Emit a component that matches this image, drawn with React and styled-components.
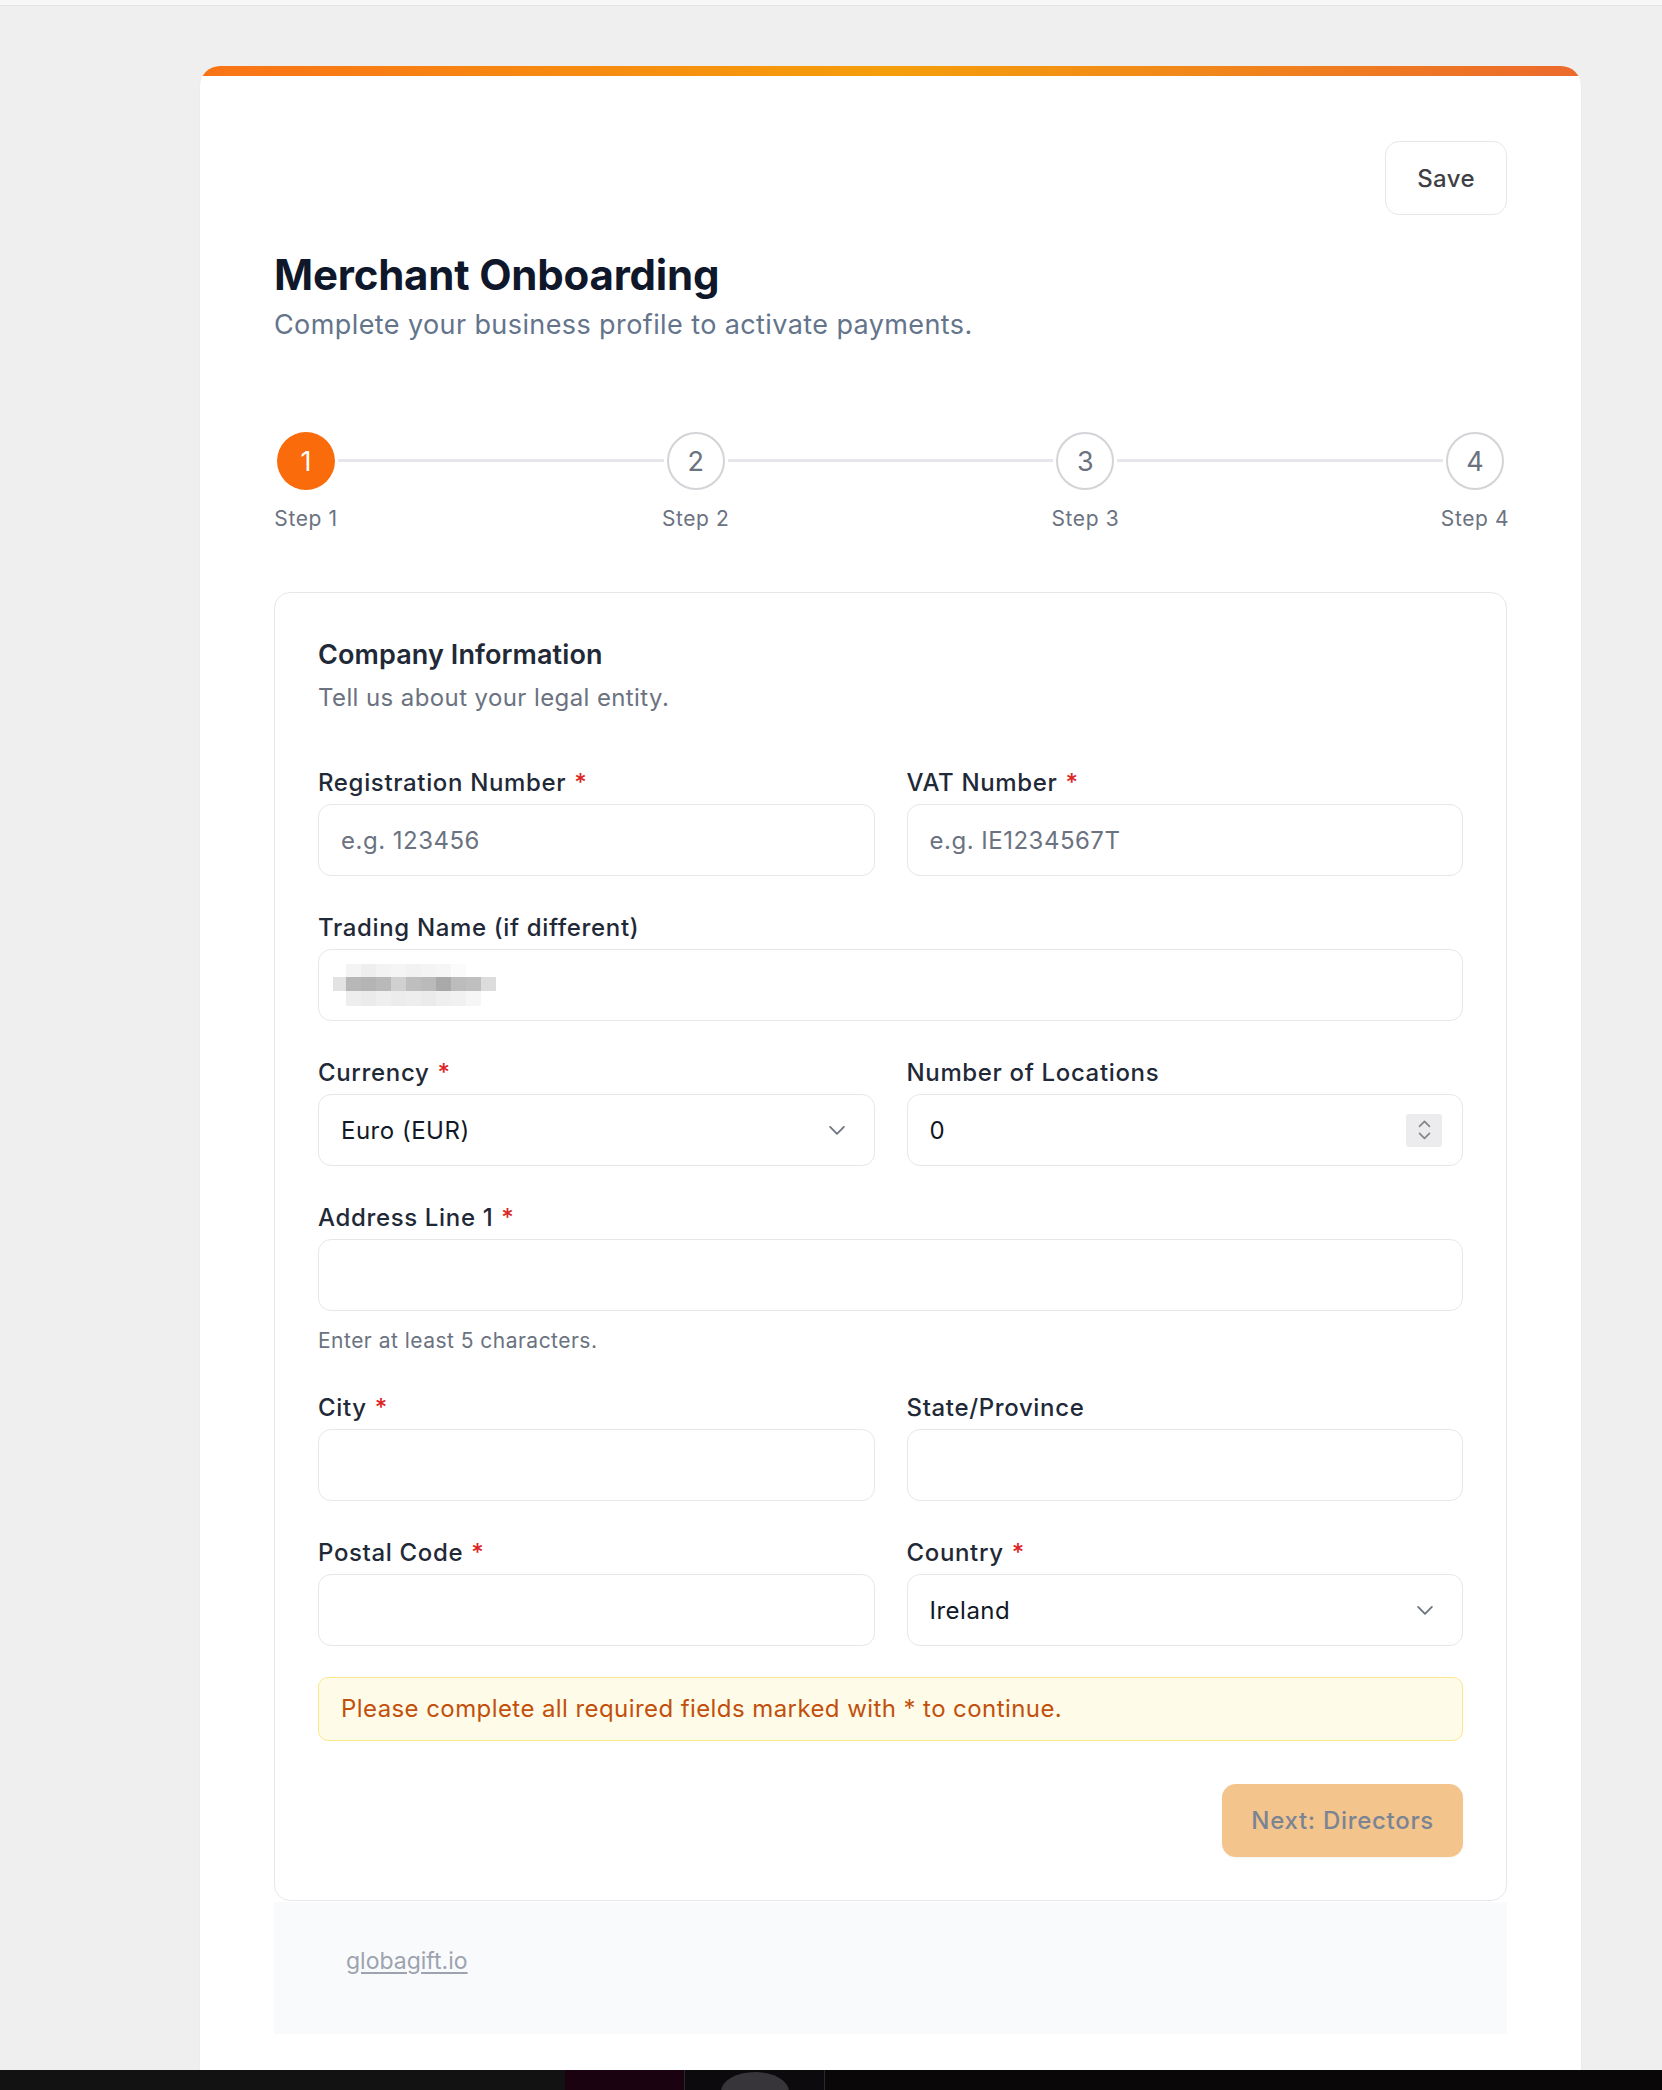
import React from "react";
import styled, { createGlobalStyle } from "styled-components";

const GlobalStyle = createGlobalStyle`
  html, body {
    margin: 0;
    padding: 0;
    background: #efefef;
  }
  body {
    font-family: Inter, "Noto Sans", "Liberation Sans", sans-serif;
    letter-spacing: 0.4px;
    -webkit-font-smoothing: antialiased;
  }
  * {
    box-sizing: border-box;
  }
`;

const Page = styled.div`
  width: 1662px;
  height: 2090px;
  display: flex;
  flex-direction: column;
  overflow: hidden;
  background: #efefef;
`;

const TopStrip = styled.div`
  height: 6px;
  flex-shrink: 0;
  background: #f7f7f7;
  border-bottom: 1px solid #e3e3e3;
`;

const Stage = styled.div`
  flex: 1;
  min-height: 0;
  overflow: hidden;
  padding: 60px 0 0 200px;
`;

const Card = styled.div`
  width: 1381px;
  min-height: 100%;
  background: #fff;
  border-radius: 20px 20px 0 0;
  overflow: hidden;
  box-shadow: 0 1px 3px rgba(0, 0, 0, 0.04);
`;

const Accent = styled.div`
  height: 10px;
  background: linear-gradient(90deg, #f97316 0%, #f59e0b 50%, #ec6a2c 100%);
`;

const CardBody = styled.div`
  padding: 65px 74px 0 74px;
`;

const TopBar = styled.div`
  display: flex;
  justify-content: flex-end;
`;

const SaveButton = styled.button`
  height: 74px;
  padding: 0 31px;
  border: 1.5px solid #e5e7eb;
  border-radius: 14px;
  background: #fff;
  color: #3f3f46;
  font-family: inherit;
  font-size: 24px;
  font-weight: 500;
  letter-spacing: 0.4px;
  cursor: pointer;
`;

const Title = styled.h1`
  margin: 35px 0 0;
  font-size: 42px;
  line-height: 50px;
  font-weight: 700;
  color: #0f172a;
  letter-spacing: -0.2px;
`;

const Subtitle = styled.p`
  margin: 5px 0 0;
  font-size: 27px;
  line-height: 40px;
  color: #64748b;
`;

const Stepper = styled.div`
  display: flex;
  align-items: flex-start;
  margin-top: 87px;
`;

const Step = styled.div`
  display: flex;
  flex-direction: column;
  align-items: center;
  width: 64px;
`;

const Circle = styled.div`
  width: 58px;
  height: 58px;
  border-radius: 50%;
  display: flex;
  align-items: center;
  justify-content: center;
  font-size: 27px;
  letter-spacing: 0;
  background: ${(p) => (p.$active ? "#f96b0b" : "#fff")};
  color: ${(p) => (p.$active ? "#fff" : "#6b7280")};
  border: ${(p) => (p.$active ? "none" : "2px solid #d4d4d8")};
`;

const StepLabel = styled.span`
  margin-top: 14px;
  font-size: 21px;
  line-height: 30px;
  color: #6b7280;
  white-space: nowrap;
  letter-spacing: 0.6px;
`;

const Connector = styled.div`
  flex: 1;
  height: 3px;
  margin-top: 27px;
  background: #e5e7eb;
`;

const Panel = styled.section`
  margin-top: 58px;
  border: 1.5px solid #e5e7eb;
  border-radius: 16px;
  padding: 42px 43px 43px;
`;

const PanelTitle = styled.h2`
  margin: 0;
  font-size: 27px;
  line-height: 40px;
  font-weight: 600;
  color: #1f2937;
  letter-spacing: 0.1px;
`;

const PanelSubtitle = styled.p`
  margin: 5px 0 0;
  font-size: 24px;
  line-height: 36px;
  color: #6b7280;
`;

const Fields = styled.div`
  margin-top: 49px;
  display: grid;
  grid-template-columns: 1fr 1fr;
  column-gap: 32px;
  row-gap: 34px;
`;

const Field = styled.div`
  display: flex;
  flex-direction: column;
  grid-column: ${(p) => (p.$wide ? "1 / -1" : "auto")};
`;

const Label = styled.label`
  font-size: 24px;
  line-height: 36px;
  font-weight: 500;
  color: #1f2937;
  letter-spacing: 0.65px;
  margin-bottom: 3px;
`;

const Required = styled.span`
  color: #dc2626;
  margin-left: 8px;
`;

const TextInput = styled.input`
  height: 72px;
  width: 100%;
  border: 1.5px solid #e5e7eb;
  border-radius: 13px;
  padding: 0 22px;
  font-family: inherit;
  font-size: 24px;
  letter-spacing: 0.5px;
  color: #111827;
  background: #fff;
  outline: none;
  &::placeholder {
    color: #6b7280;
  }
`;

const Box = styled.div`
  height: 72px;
  border: 1.5px solid #e5e7eb;
  border-radius: 13px;
  padding: 0 28px 0 22px;
  display: flex;
  align-items: center;
  justify-content: space-between;
  background: #fff;
  font-size: 24px;
  letter-spacing: 0.5px;
  color: #111827;
`;

const NumberBox = styled(Box)`
  padding-right: 20px;
`;

const BareInput = styled.input`
  flex: 1;
  min-width: 0;
  border: none;
  outline: none;
  background: transparent;
  font-family: inherit;
  font-size: 24px;
  color: #111827;
  padding: 0;
`;

const Spinner = styled.div`
  width: 36px;
  height: 33px;
  background: #ececee;
  border-radius: 3px;
  display: flex;
  flex-direction: column;
  align-items: center;
  justify-content: center;
  gap: 4px;
`;

const Helper = styled.p`
  margin: 15px 0 0;
  font-size: 21px;
  line-height: 30px;
  color: #6b7280;
  letter-spacing: 0.48px;
`;

const Mosaic = styled.div`
  display: flex;
  flex-direction: column;
  margin-left: -8px;
`;

const MosaicRow = styled.div`
  display: flex;
`;

const Tile = styled.span`
  display: block;
  width: ${(p) => p.$w}px;
  height: ${(p) => p.$h}px;
  background: ${(p) => p.$c};
`;

const Notice = styled.div`
  grid-column: 1 / -1;
  margin-top: -3px;
  border: 1.5px solid #fde68a;
  background: #fefce8;
  border-radius: 10px;
  padding: 13px 22px;
  font-size: 24px;
  line-height: 36px;
  letter-spacing: 0.42px;
  color: #c2500c;
`;

const Actions = styled.div`
  grid-column: 1 / -1;
  display: flex;
  justify-content: flex-end;
  margin-top: 9px;
`;

const NextButton = styled.button`
  height: 73px;
  padding: 0 29px;
  border: none;
  border-radius: 14px;
  background: #f4c48d;
  color: #7b8493;
  font-family: inherit;
  font-size: 24px;
  font-weight: 500;
  letter-spacing: 0.7px;
  box-shadow: 0 1px 2px rgba(0, 0, 0, 0.05);
  cursor: not-allowed;
`;

const Footer = styled.footer`
  margin-top: 1px;
  background: #f9fafb;
  height: 132px;
  padding: 41px 72px 0;
`;

const FooterLink = styled.a`
  font-size: 23px;
  line-height: 36px;
  letter-spacing: 0;
  color: #9ca3af;
  text-decoration: underline;
  text-underline-offset: 3px;
`;

const Taskbar = styled.div`
  height: 20px;
  flex-shrink: 0;
  display: flex;
  background: #0b080b;
`;

const TaskSegment = styled.div`
  width: ${(p) => p.$w}px;
  flex: ${(p) => (p.$grow ? 1 : "none")};
  background: ${(p) => p.$c};
  border-right: ${(p) => (p.$sep ? "1px solid #2a2a2a" : "none")};
  display: flex;
  justify-content: center;
`;

const TaskBlob = styled.span`
  display: block;
  width: 68px;
  height: 40px;
  margin-top: 2px;
  border-radius: 50%;
  background: #37353a;
`;

const Chevron = ({ dir = "down", size = 18 }) => (
  <svg width={size} height={size * 0.6} viewBox="0 0 18 11" fill="none" style={{ display: "block" }}>
    <polyline
      points={dir === "down" ? "2,2 9,9 16,2" : "2,9 9,2 16,9"}
      stroke={size < 16 ? "#85858c" : "#6b7280"}
      strokeWidth={size < 16 ? "2.4" : "1.8"}
      strokeLinecap="round"
      strokeLinejoin="round"
    />
  </svg>
);

const mosaic = [
  [
    [13, "#ffffff"], [15, "#f4f4f4"], [15, "#eeeeee"], [15, "#f3f3f3"],
    [15, "#f5f5f5"], [15, "#f2f2f2"], [15, "#f4f4f4"], [15, "#f6f6f6"],
    [15, "#fbfbfb"], [15, "#ffffff"], [15, "#ffffff"],
  ],
  [
    [13, "#e2e2e2"], [15, "#b7b7b7"], [15, "#b4b4b4"], [15, "#b9b9b9"],
    [15, "#d0d0d0"], [15, "#bebebe"], [15, "#bababa"], [15, "#a9a9a9"],
    [15, "#bcbcbc"], [15, "#bfbfbf"], [15, "#dcdcdc"],
  ],
  [
    [13, "#ffffff"], [15, "#eeeeee"], [15, "#ebebeb"], [15, "#efefef"],
    [15, "#ececec"], [15, "#eeeeee"], [15, "#ebebeb"], [15, "#efefef"],
    [15, "#f1f1f1"], [15, "#f6f6f6"], [15, "#ffffff"],
  ],
];
const rowHeights = [13, 14, 15];

const steps = [1, 2, 3, 4];

const App = () => {
  return (
    <>
      <GlobalStyle />
      <Page>
        <TopStrip />
        <Stage>
          <Card>
            <Accent />
            <CardBody>
              <TopBar>
                <SaveButton>Save</SaveButton>
              </TopBar>
              <Title>Merchant Onboarding</Title>
              <Subtitle>Complete your business profile to activate payments.</Subtitle>

              <Stepper>
                {steps.map((n, i) => (
                  <React.Fragment key={n}>
                    {i > 0 && <Connector />}
                    <Step>
                      <Circle $active={n === 1}>{n}</Circle>
                      <StepLabel>Step {n}</StepLabel>
                    </Step>
                  </React.Fragment>
                ))}
              </Stepper>

              <Panel>
                <PanelTitle>Company Information</PanelTitle>
                <PanelSubtitle>Tell us about your legal entity.</PanelSubtitle>

                <Fields>
                  <Field>
                    <Label>
                      Registration Number<Required>*</Required>
                    </Label>
                    <TextInput placeholder="e.g. 123456" />
                  </Field>
                  <Field>
                    <Label>
                      VAT Number<Required>*</Required>
                    </Label>
                    <TextInput placeholder="e.g. IE1234567T" />
                  </Field>

                  <Field $wide>
                    <Label>Trading Name (if different)</Label>
                    <Box>
                      <Mosaic>
                        {mosaic.map((row, r) => (
                          <MosaicRow key={r}>
                            {row.map(([w, c], k) => (
                              <Tile key={k} $w={w} $h={rowHeights[r]} $c={c} />
                            ))}
                          </MosaicRow>
                        ))}
                      </Mosaic>
                    </Box>
                  </Field>

                  <Field>
                    <Label>
                      Currency<Required>*</Required>
                    </Label>
                    <Box>
                      <span>Euro (EUR)</span>
                      <Chevron />
                    </Box>
                  </Field>
                  <Field>
                    <Label>Number of Locations</Label>
                    <NumberBox>
                      <BareInput defaultValue="0" />
                      <Spinner>
                        <Chevron dir="up" size={13} />
                        <Chevron dir="down" size={13} />
                      </Spinner>
                    </NumberBox>
                  </Field>

                  <Field $wide>
                    <Label>
                      Address Line 1<Required>*</Required>
                    </Label>
                    <TextInput />
                    <Helper>Enter at least 5 characters.</Helper>
                  </Field>

                  <Field>
                    <Label>
                      City<Required>*</Required>
                    </Label>
                    <TextInput />
                  </Field>
                  <Field>
                    <Label>State/Province</Label>
                    <TextInput />
                  </Field>

                  <Field>
                    <Label>
                      Postal Code<Required>*</Required>
                    </Label>
                    <TextInput />
                  </Field>
                  <Field>
                    <Label>
                      Country<Required>*</Required>
                    </Label>
                    <Box>
                      <span>Ireland</span>
                      <Chevron />
                    </Box>
                  </Field>

                  <Notice>Please complete all required fields marked with * to continue.</Notice>

                  <Actions>
                    <NextButton disabled>Next: Directors</NextButton>
                  </Actions>
                </Fields>
              </Panel>

              <Footer>
                <FooterLink href="#">globagift.io</FooterLink>
              </Footer>
            </CardBody>
          </Card>
        </Stage>
        <Taskbar>
          <TaskSegment $w={565} $c="#121212" />
          <TaskSegment $w={120} $c="#1a0211" $sep />
          <TaskSegment $w={140} $c="#0d0a0e" $sep>
            <TaskBlob />
          </TaskSegment>
          <TaskSegment $grow $c="#0a0709" />
        </Taskbar>
      </Page>
    </>
  );
};

export default App;
